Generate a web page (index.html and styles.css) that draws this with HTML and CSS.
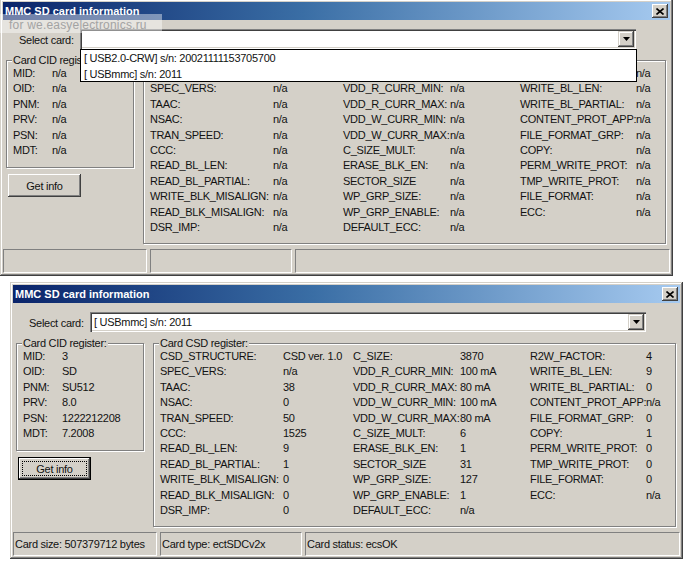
FILE: index.html
```html
<!DOCTYPE html>
<html>
<head>
<meta charset="utf-8">
<title>MMC SD card information</title>
<link rel="stylesheet" href="styles.css">
</head>
<body>
<div class="page">

  <div class="win win-top">
    <div class="titlebar">
      <span class="title">MMC SD card information</span>
      <span class="close"><svg width="8" height="7" viewBox="0 0 8 7"><path d="M0.5 0.5 L7.5 6.5 M7.5 0.5 L0.5 6.5" stroke="#000" stroke-width="1.6" fill="none"/></svg></span>
    </div>
    <div class="body">
      <div class="select-row">
        <span class="select-label">Select card:</span>
        <div class="combo">
          <span class="combo-text"></span>
          <span class="combo-btn"><svg width="7" height="4" viewBox="0 0 7 4"><path d="M0 0 H7 L3.5 4 Z" fill="#000"/></svg></span>
          <ul class="droplist">
            <li>[ USB2.0-CRW] s/n: 20021111153705700</li>
            <li>[ USBmmc] s/n: 2011</li>
          </ul>
        </div>
      </div>
      <div class="main">
        <div class="left">
          <div class="group cid">
            <div class="group-label">Card CID register:</div>
            <div class="cid-grid">
              <span>MID:</span><span>n/a</span>
              <span>OID:</span><span>n/a</span>
              <span>PNM:</span><span>n/a</span>
              <span>PRV:</span><span>n/a</span>
              <span>PSN:</span><span>n/a</span>
              <span>MDT:</span><span>n/a</span>
            </div>
          </div>
          <div class="btn"><span class="btn-face">Get info</span></div>
        </div>
        <div class="group csd">
          <div class="group-label">Card CSD register:</div>
          <div class="csd-cols">
            <div class="csd-col c1">
              <span>CSD_STRUCTURE:</span><span>n/a</span>
              <span>SPEC_VERS:</span><span>n/a</span>
              <span>TAAC:</span><span>n/a</span>
              <span>NSAC:</span><span>n/a</span>
              <span>TRAN_SPEED:</span><span>n/a</span>
              <span>CCC:</span><span>n/a</span>
              <span>READ_BL_LEN:</span><span>n/a</span>
              <span>READ_BL_PARTIAL:</span><span>n/a</span>
              <span>WRITE_BLK_MISALIGN:</span><span>n/a</span>
              <span>READ_BLK_MISALIGN:</span><span>n/a</span>
              <span>DSR_IMP:</span><span>n/a</span>
            </div>
            <div class="csd-col c2">
              <span>C_SIZE:</span><span>n/a</span>
              <span>VDD_R_CURR_MIN:</span><span>n/a</span>
              <span>VDD_R_CURR_MAX:</span><span>n/a</span>
              <span>VDD_W_CURR_MIN:</span><span>n/a</span>
              <span>VDD_W_CURR_MAX:</span><span>n/a</span>
              <span>C_SIZE_MULT:</span><span>n/a</span>
              <span>ERASE_BLK_EN:</span><span>n/a</span>
              <span>SECTOR_SIZE</span><span>n/a</span>
              <span>WP_GRP_SIZE:</span><span>n/a</span>
              <span>WP_GRP_ENABLE:</span><span>n/a</span>
              <span>DEFAULT_ECC:</span><span>n/a</span>
            </div>
            <div class="csd-col c3">
              <span>R2W_FACTOR:</span><span>n/a</span>
              <span>WRITE_BL_LEN:</span><span>n/a</span>
              <span>WRITE_BL_PARTIAL:</span><span>n/a</span>
              <span>CONTENT_PROT_APP:</span><span>n/a</span>
              <span>FILE_FORMAT_GRP:</span><span>n/a</span>
              <span>COPY:</span><span>n/a</span>
              <span>PERM_WRITE_PROT:</span><span>n/a</span>
              <span>TMP_WRITE_PROT:</span><span>n/a</span>
              <span>FILE_FORMAT:</span><span>n/a</span>
              <span>ECC:</span><span>n/a</span>
            </div>
          </div>
        </div>
      </div>
    </div>
    <div class="statusbar">
      <div class="panel p1"></div>
      <div class="panel p2"></div>
      <div class="panel p3"></div>
    </div>
  </div>

  <div class="watermark">for we.easyelectronics.ru</div>

  <div class="win win-bottom">
    <div class="titlebar">
      <span class="title">MMC SD card information</span>
      <span class="close"><svg width="8" height="7" viewBox="0 0 8 7"><path d="M0.5 0.5 L7.5 6.5 M7.5 0.5 L0.5 6.5" stroke="#000" stroke-width="1.6" fill="none"/></svg></span>
    </div>
    <div class="body">
      <div class="select-row">
        <span class="select-label">Select card:</span>
        <div class="combo">
          <span class="combo-text">[ USBmmc] s/n: 2011</span>
          <span class="combo-btn"><svg width="7" height="4" viewBox="0 0 7 4"><path d="M0 0 H7 L3.5 4 Z" fill="#000"/></svg></span>
        </div>
      </div>
      <div class="main">
        <div class="left">
          <div class="group cid">
            <div class="group-label">Card CID register:</div>
            <div class="cid-grid">
              <span>MID:</span><span>3</span>
              <span>OID:</span><span>SD</span>
              <span>PNM:</span><span>SU512</span>
              <span>PRV:</span><span>8.0</span>
              <span>PSN:</span><span>1222212208</span>
              <span>MDT:</span><span>7.2008</span>
            </div>
          </div>
          <div class="btn btn-default"><span class="btn-face">Get info</span></div>
        </div>
        <div class="group csd">
          <div class="group-label">Card CSD register:</div>
          <div class="csd-cols">
            <div class="csd-col c1">
              <span>CSD_STRUCTURE:</span><span>CSD ver. 1.0</span>
              <span>SPEC_VERS:</span><span>n/a</span>
              <span>TAAC:</span><span>38</span>
              <span>NSAC:</span><span>0</span>
              <span>TRAN_SPEED:</span><span>50</span>
              <span>CCC:</span><span>1525</span>
              <span>READ_BL_LEN:</span><span>9</span>
              <span>READ_BL_PARTIAL:</span><span>1</span>
              <span>WRITE_BLK_MISALIGN:</span><span>0</span>
              <span>READ_BLK_MISALIGN:</span><span>0</span>
              <span>DSR_IMP:</span><span>0</span>
            </div>
            <div class="csd-col c2">
              <span>C_SIZE:</span><span>3870</span>
              <span>VDD_R_CURR_MIN:</span><span>100 mA</span>
              <span>VDD_R_CURR_MAX:</span><span>80 mA</span>
              <span>VDD_W_CURR_MIN:</span><span>100 mA</span>
              <span>VDD_W_CURR_MAX:</span><span>80 mA</span>
              <span>C_SIZE_MULT:</span><span>6</span>
              <span>ERASE_BLK_EN:</span><span>1</span>
              <span>SECTOR_SIZE</span><span>31</span>
              <span>WP_GRP_SIZE:</span><span>127</span>
              <span>WP_GRP_ENABLE:</span><span>1</span>
              <span>DEFAULT_ECC:</span><span>n/a</span>
            </div>
            <div class="csd-col c3">
              <span>R2W_FACTOR:</span><span>4</span>
              <span>WRITE_BL_LEN:</span><span>9</span>
              <span>WRITE_BL_PARTIAL:</span><span>0</span>
              <span>CONTENT_PROT_APP:</span><span>n/a</span>
              <span>FILE_FORMAT_GRP:</span><span>0</span>
              <span>COPY:</span><span>1</span>
              <span>PERM_WRITE_PROT:</span><span>0</span>
              <span>TMP_WRITE_PROT:</span><span>0</span>
              <span>FILE_FORMAT:</span><span>0</span>
              <span>ECC:</span><span>n/a</span>
            </div>
          </div>
        </div>
      </div>
    </div>
    <div class="statusbar">
      <div class="panel p1">Card size: 507379712 bytes</div>
      <div class="panel p2">Card type: ectSDCv2x</div>
      <div class="panel p3">Card status: ecsOK</div>
    </div>
  </div>

</div>
</body>
</html>
```

FILE: styles.css
```css
* { box-sizing: border-box; }

html, body {
  margin: 0;
  padding: 0;
  background: #fff;
}

body {
  width: 700px;
  height: 581px;
  overflow: hidden;
  font-family: "Liberation Sans", Arial, sans-serif;
  font-size: 11px;
  letter-spacing: -0.28px;
  color: #121212;
}

.page {
  position: relative;
  width: 700px;
  height: 581px;
}

/* window frame */
.win {
  width: 673px;
  height: 277px;
  padding: 3px;
  background: #d4d0c8;
  display: flex;
  flex-direction: column;
  box-shadow:
    inset -1px -1px 0 #404040,
    inset 1px 1px 0 #d4d0c8,
    inset -2px -2px 0 #808080,
    inset 2px 2px 0 #fff;
}

.win-top { margin-top: -1px; }
.win-bottom { margin: 6px 0 0 10px; }

/* title bar */
.titlebar {
  height: 18px;
  flex: none;
  display: flex;
  align-items: center;
  justify-content: space-between;
  padding: 0 2px 0 2px;
  background: linear-gradient(to right, #0a246a 0%, #3a6ea5 45%, #a6caf0 100%);
}

.title {
  color: #fff;
  font-weight: bold;
  font-size: 11px;
  letter-spacing: 0;
}

.close {
  width: 16px;
  height: 14px;
  display: flex;
  align-items: center;
  justify-content: center;
  background: #d4d0c8;
  box-shadow:
    inset -1px -1px 0 #404040,
    inset 1px 1px 0 #fff,
    inset -2px -2px 0 #808080;
}

/* body */
.body {
  flex: 1;
  display: flex;
  flex-direction: column;
}

.select-row {
  display: flex;
  align-items: center;
  margin-top: 9px;
  height: 20px;
  padding-left: 16px;
}

.select-label {
  width: 61px;
  flex: none;
  line-height: 20px;
  padding-top: 2px;
}

.combo {
  position: relative;
  width: 556px;
  height: 20px;
  background: #fff;
  display: flex;
  align-items: center;
  justify-content: space-between;
  padding: 2px 2px 2px 4px;
  box-shadow:
    inset 1px 1px 0 #808080,
    inset 2px 2px 0 #404040,
    inset -1px -1px 0 #fff,
    inset -2px -2px 0 #d4d0c8;
}

.combo-text {
  line-height: 16px;
  white-space: nowrap;
}

.combo-btn {
  width: 16px;
  height: 16px;
  display: flex;
  align-items: center;
  justify-content: center;
  padding-left: 1px;
  background: #d4d0c8;
  box-shadow:
    inset -1px -1px 0 #404040,
    inset 1px 1px 0 #d4d0c8,
    inset -2px -2px 0 #808080,
    inset 2px 2px 0 #fff;
}

.droplist {
  position: absolute;
  left: 0;
  top: 100%;
  width: 557px;
  height: 33px;
  margin: 0;
  padding: 1px 0 0 3px;
  list-style: none;
  background: #fff;
  border: 1px solid #000;
  z-index: 2;
}

.droplist li {
  line-height: 15.5px;
  white-space: nowrap;
}

.main {
  display: flex;
  align-items: flex-start;
  margin-top: 11px;
  padding-left: 3px;
}

.left {
  width: 128px;
  flex: none;
}

/* group boxes */
.group {
  border: 1px solid #808080;
  box-shadow: inset 1px 1px 0 #fff, 1px 1px 0 #fff;
}

.group-label {
  width: fit-content;
  margin: -7px 0 -1px 5px;
  padding: 0 1px;
  line-height: 13px;
  background: #d4d0c8;
  white-space: nowrap;
}

.cid {
  width: 128px;
  height: 108px;
}

.cid-grid {
  display: grid;
  grid-template-columns: 39px auto;
  grid-auto-rows: 15.4px;
  line-height: 15.4px;
  padding-left: 6px;
}

.csd {
  width: 523px;
  height: 184px;
  margin-left: 9px;
}

.csd-cols {
  display: flex;
  padding-left: 6px;
}

.csd-col {
  display: grid;
  grid-auto-rows: 15.4px;
  line-height: 15.4px;
}

.csd-col span { white-space: nowrap; }

.c1 { grid-template-columns: 123px 70px; }
.c2 { grid-template-columns: 107px 70px; }
.c3 { grid-template-columns: 116px auto; }

/* button */
.btn {
  width: 73px;
  height: 23px;
  margin: 6px 0 0 2px;
  padding: 2px;
  display: flex;
  background: #d4d0c8;
  box-shadow:
    inset -1px -1px 0 #404040,
    inset 1px 1px 0 #fff,
    inset -2px -2px 0 #808080,
    inset 2px 2px 0 #d4d0c8;
}

.btn-face {
  flex: 1;
  display: flex;
  align-items: center;
  justify-content: center;
  padding-top: 1px;
}

.btn-default {
  border: 1px solid #000;
  padding: 3px;
  box-shadow:
    inset -1px -1px 0 #404040,
    inset 1px 1px 0 #fff,
    inset -2px -2px 0 #808080;
}

.btn-default .btn-face {
  border: 1px dotted #000;
}

/* status bar */
.statusbar {
  height: 24px;
  flex: none;
  display: flex;
  gap: 3px;
}

.panel {
  height: 24px;
  line-height: 23px;
  padding-left: 1px;
  white-space: nowrap;
  border-top: 1px solid #808080;
  border-left: 1px solid #808080;
  border-right: 1px solid #fff;
  border-bottom: 1px solid #fff;
}

.p1 { width: 144px; }
.p2 { width: 142px; }
.p3 { flex: 1; }

/* watermark overlay */
.watermark {
  position: absolute;
  left: 0;
  top: 15px;
  width: 162px;
  height: 19px;
  padding-left: 9px;
  line-height: 22px;
  font-size: 12px;
  letter-spacing: 0.2px;
  color: #a3a3a3;
  background: rgba(255, 255, 255, 0.42);
}
```
